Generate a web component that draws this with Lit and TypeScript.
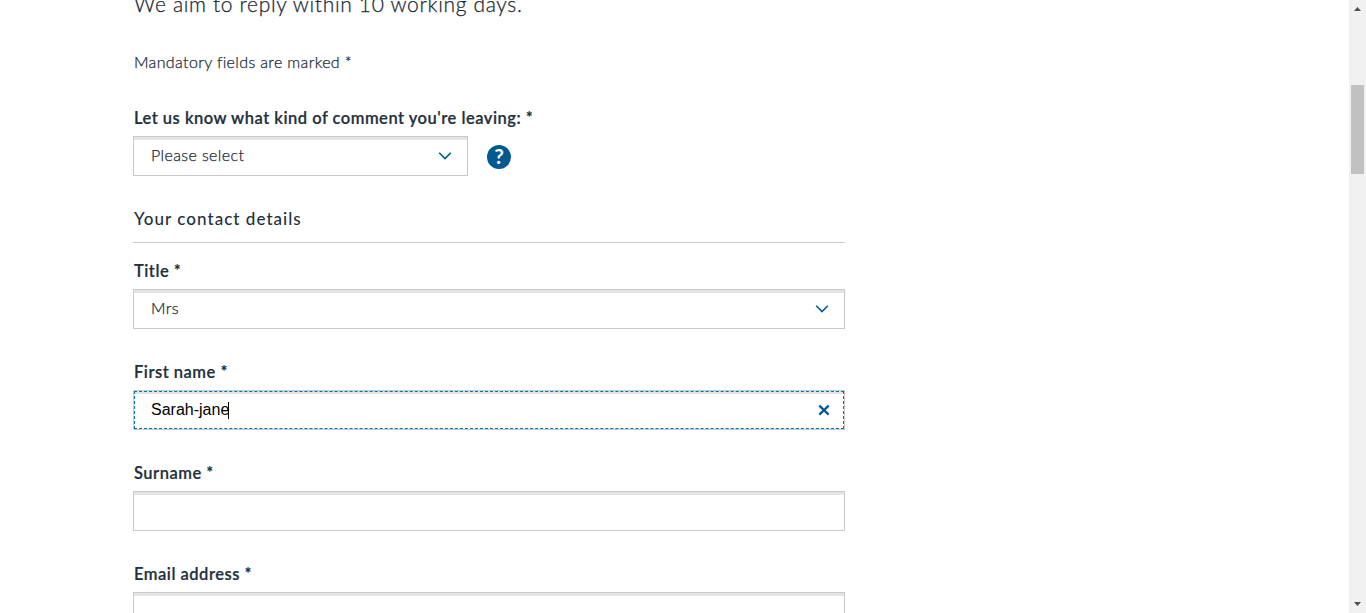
import { LitElement, html, css, svg } from "lit";
import { customElement } from "lit/decorators.js";

const chevron = svg`<svg class="chevron" width="14" height="10" viewBox="0 0 14 10"><path d="M1.2 1.7L7 7.5L12.8 1.7" fill="none" stroke="#005a8f" stroke-width="1.6"/></svg>`;

@customElement("app-root")
export class AppRoot extends LitElement {
  static styles = css`
    :host {
      display: flex;
      justify-content: space-between;
      width: 100%;
      height: 613px;
      overflow: hidden;
      background: #fff;
      color: #22303c;
      font: 400 16px/20px Lato, sans-serif;
    }
    * { box-sizing: border-box; }
    main { width: 712px; margin-left: 133px; white-space: nowrap; flex: none; }
    p, h2 { margin: 0; padding-left: 1px; }
    .intro, .note, .value { -webkit-text-stroke: 0.25px #1a2834; color: #1a2834; font-weight: 300; }
    .intro { font-size: 21px; line-height: 30px; height: 30px; margin-top: -11px; letter-spacing: 0.66px; }
    .note { font-size: 16px; margin-top: 33px; height: 20px; letter-spacing: 0.36px; }
    .label { display: block; padding: 1px 0 0 1px; height: 28px; font-weight: 600; font-size: 16.5px; letter-spacing: 0.5px; -webkit-text-stroke: 0.2px #22303c; }
    .kind { margin-top: 35px; }
    .row { display: flex; align-items: center; gap: 19px; margin-top: 1px; }
    .box {
      display: flex;
      align-items: center;
      justify-content: space-between;
      width: 712px;
      height: 40px;
      padding: 0 15px 0 17px;
      border: 1px solid #c9c9c9;
      box-shadow: inset 0 3px #e4e4e4;
      margin: 1px 0 32px;
    }
    .box.short { width: 335px; margin: 0; }
    .box.focus { outline: 1px dashed #0073b1; outline-offset: -2px; padding-right: 14px; }
    .value { font-size: 16px; letter-spacing: 0.38px; padding-bottom: 2px; }
    .typed { display: flex; align-items: center; font: 16px/18px "Liberation Sans", Arial, sans-serif; color: #000; }
    .caret { width: 1px; height: 17px; margin-left: -1px; background: #000; }
    .help { margin-top: 2px; }
    .qm { font: 700 21px Lato, sans-serif; fill: #fff; }
    h2 { margin-top: 32px; padding-top: 1px; height: 35px; font-size: 17px; font-weight: 500; letter-spacing: 1.03px; border-bottom: 1px solid #c9c9c9; margin-bottom: 17px; }
    .bar { width: 17px; height: 613px; flex: none; display: flex; flex-direction: column; align-items: center; background: #f1f1f1; }
    .thumb { width: 13px; height: 89px; margin-top: 68px; background: #c1c1c1; }
    .bar .down { margin-top: auto; }
    .bar svg { display: block; }
  `;

  field(label: string, content: unknown = "", cls = "") {
    return html`<label class="label">${label} *</label>
      <div class="box ${cls}">${content}</div>`;
  }

  render() {
    return html`
      <main>
        <p class="intro">We aim to reply within 10 working days.</p>
        <p class="note">Mandatory fields are marked *</p>
        <label class="label kind">Let us know what kind of comment you're leaving: *</label>
        <div class="row">
          <div class="box short"><span class="value">Please select</span>${chevron}</div>
          <svg class="help" width="24" height="24" viewBox="0 0 24 24"><circle cx="12" cy="12" r="12" fill="#005a8f"/><text class="qm" x="12" y="19.3" text-anchor="middle">?</text></svg>
        </div>
        <h2>Your contact details</h2>
        ${this.field("Title", html`<span class="value">Mrs</span>${chevron}`)}
        ${this.field("First name", html`<span class="typed">Sarah-jane<i class="caret"></i></span>
          <svg width="12" height="12" viewBox="0 0 12 12"><path d="M1.3 1.6L10.7 10.6M10.7 1.6L1.3 10.6" stroke="#005a8f" stroke-width="2.3"/></svg>`, "focus")}
        ${this.field("Surname")}
        ${this.field("Email address")}
      </main>
      <div class="bar">
        <svg width="17" height="17" viewBox="0 0 17 17"><path d="M5 11L8.5 7L12 11Z" fill="#505050"/></svg>
        <div class="thumb"></div>
        <svg class="down" width="17" height="17" viewBox="0 0 17 17"><path d="M5 6L8.5 10L12 6Z" fill="#505050"/></svg>
      </div>`;
  }
}
